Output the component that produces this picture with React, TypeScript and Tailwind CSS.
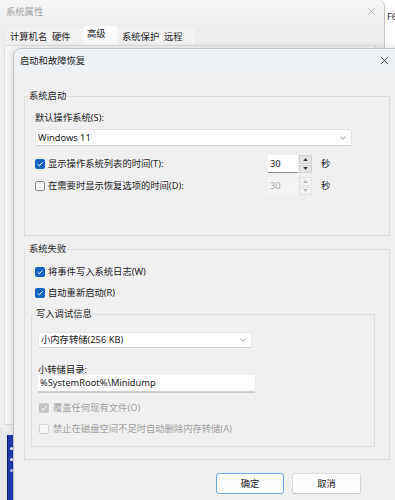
import React from 'react';

function CloseIcon({ className }: { className?: string }) {
  return (
    <svg viewBox="0 0 10 10" className={className} fill="none" stroke="currentColor" strokeWidth="0.9">
      <path d="M1 1 L9 9 M9 1 L1 9" />
    </svg>
  );
}

function Chevron() {
  return (
    <svg viewBox="0 0 6 4" className="h-[4px] w-[6px] text-[#7a7a7a]" fill="none" stroke="currentColor" strokeWidth="0.8">
      <path d="M0.5 0.8 L3 3.2 L5.5 0.8" />
    </svg>
  );
}

function Check({ checked, disabled }: { checked?: boolean; disabled?: boolean }) {
  if (checked) {
    return (
      <span
        className={`flex h-[10px] w-[10px] shrink-0 items-center justify-center rounded-[2px] ${
          disabled ? 'bg-[#c6c6c6]' : 'bg-[#1464bf]'
        }`}
      >
        <svg viewBox="0 0 10 10" className="h-[10px] w-[10px]" fill="none" stroke="white" strokeWidth="1">
          <path d="M2.6 5.2 L4.3 6.8 L7.5 3.4" />
        </svg>
      </span>
    );
  }
  return (
    <span
      className={`h-[10px] w-[10px] shrink-0 rounded-[2px] border ${
        disabled ? 'border-[#d3d3d3] bg-[#f8f8f8]' : 'border-[#8c8c8c] bg-white'
      }`}
    />
  );
}

function Spinner({ disabled }: { disabled?: boolean }) {
  const tri = disabled ? 'text-[#b8b8b8]' : 'text-[#333]';
  return (
    <div className="flex h-[18px] items-stretch">
      <div
        className={`flex w-[30px] items-center pl-[2px] ${
          disabled ? 'bg-[#f4f4f4] text-[#a8a8a8]' : 'border-b border-[#8a8a8a] bg-white'
        }`}
      >
        30
      </div>
      <div className="ml-[1px] flex w-[13px] flex-col gap-[1px]">
        <span
          className={`flex flex-1 items-center justify-center border ${
            disabled ? 'border-[#e2e2e2] bg-[#f3f3f3]' : 'border-[#cfcfcf] bg-[#e6e6e6]'
          } ${tri}`}
        >
          <svg viewBox="0 0 6 4" className="h-[3px] w-[5px]" fill="currentColor">
            <path d="M3 0 L6 4 L0 4 Z" />
          </svg>
        </span>
        <span
          className={`flex flex-1 items-center justify-center border ${
            disabled ? 'border-[#e2e2e2] bg-[#f3f3f3]' : 'border-[#cfcfcf] bg-[#e6e6e6]'
          } ${tri}`}
        >
          <svg viewBox="0 0 6 4" className="h-[3px] w-[5px]" fill="currentColor">
            <path d="M0 0 L6 0 L3 4 Z" />
          </svg>
        </span>
      </div>
      <span className={`ml-[9px] flex items-center ${disabled ? '' : ''}`}>秒</span>
    </div>
  );
}

const tabs = [
  { label: '计算机名', w: 'w-[43px]', pl: 'pl-[4px]' },
  { label: '硬件', w: 'w-[35px]', pl: 'pl-[3px]' },
  { label: '高级', w: 'w-[34px]', pl: 'pl-[3px]', active: true },
  { label: '系统保护', w: 'w-[44px]', pl: 'pl-[4px]' },
  { label: '远程', w: 'w-[32px]', pl: 'pl-[2px]' },
];

export default function App() {
  return (
    <div className="relative h-[500px] w-[395px] overflow-hidden bg-white font-['Noto_Sans','Noto_Sans_CJK_SC',sans-serif] text-[9.3px] text-[#1b1b1b]">
      {/* desktop strip below the parent window */}
      <div className="absolute left-0 top-[420px] h-[80px] w-[14px] bg-[#e4e6ea]" />
      <div className="absolute left-[7px] top-[435px] flex h-[65px] w-[7px] flex-col items-center gap-[8px] border-l border-[#0b1f6e] bg-[#1d3caf] pt-[12px]">
        <span className="h-[3px] w-[3px] rounded-full bg-white" />
        <span className="h-[3px] w-[3px] rounded-full bg-white" />
        <span className="h-[3px] w-[3px] rounded-full bg-[#b8c4ee]" />
      </div>

      {/* parent window: 系统属性 */}
      <div className="absolute left-0 top-[-1px] h-[434px] w-[385px] rounded-bl-[10px] rounded-tr-[8px] border-r border-[#c8c8c8] bg-[#f0f0f0]">
        <div className="flex h-[25px] items-center justify-between rounded-tr-[8px] bg-gradient-to-b from-[#f6f6f6] to-[#efefef] pl-[6px] pr-[8px]">
          <span className="text-[#a3a3a3]">系统属性</span>
          <CloseIcon className="h-[9px] w-[9px] text-[#b0b0b0]" />
        </div>
        <div className="flex h-[21px] items-end bg-[#eeeeee] pl-[6px]">
          {tabs.map((t) => (
            <span
              key={t.label}
              className={`${t.w} ${t.pl} flex items-center ${
                t.active ? 'h-[19px] bg-[#fafafa] pb-[3px]' : 'h-[17px] border-r border-[#f7f7f7] bg-[#f2f2f2]'
              }`}
            >
              {t.label}
            </span>
          ))}
        </div>
        <div className="ml-[4px] mr-[8px] h-[380px] border border-[#dfdfdf] bg-[#f7f7f7]" />
      </div>
      <span className="absolute left-[387px] top-[11px] leading-[12px] text-[#333]">F6A</span>

      {/* child dialog: 启动和故障恢复 */}
      <div className="absolute left-[13px] top-[48px] h-[470px] w-[400px] rounded-tl-[8px] border border-[#bfbfbf] bg-[#f0f0f0] shadow-[0_0_8px_rgba(0,0,0,0.16)]">
        <div className="flex h-[23px] items-center rounded-tl-[8px] bg-[#eef2f6] pl-[6px]">
          <span>启动和故障恢复</span>
          <CloseIcon className="ml-auto mr-[23px] h-[9px] w-[9px] text-[#222]" />
        </div>

        <div className="pl-[10px]">
          {/* 系统启动 */}
          <fieldset className="mt-[18px] w-[366px] border border-[#dcdcdc] p-0">
            <legend className="ml-[3px] px-[1px] leading-[12px]">系统启动</legend>
            <div className="px-[10px] pb-[40px]">
              <div className="mt-[10px] leading-[12px]">默认操作系统(S):</div>
              <div className="mt-[5px] flex h-[17px] w-[317px] items-center justify-between rounded-[2px] border border-[#e4e4e4] border-b-[#d0d0d0] bg-white pl-[2px] pr-[5px]">
                <span>Windows 11</span>
                <Chevron />
              </div>
              <div className="mt-[9px] flex h-[18px] items-center">
                <div className="flex w-[233px] items-center gap-[3px]">
                  <Check checked />
                  <span>显示操作系统列表的时间(T):</span>
                </div>
                <Spinner />
              </div>
              <div className="mt-[4px] flex h-[18px] items-center">
                <div className="flex w-[233px] items-center gap-[3px]">
                  <Check />
                  <span>在需要时显示恢复选项的时间(D):</span>
                </div>
                <Spinner disabled />
              </div>
            </div>
          </fieldset>

          {/* 系统失败 */}
          <fieldset className="mt-[7px] w-[366px] border border-[#dcdcdc] p-0">
            <legend className="ml-[3px] px-[1px] leading-[12px]">系统失败</legend>
            <div className="px-[6px] pb-[12px]">
              <div className="mt-[10px] flex h-[14px] items-center gap-[3px] pl-[4px]">
                <Check checked />
                <span>将事件写入系统日志(W)</span>
              </div>
              <div className="mt-[7px] flex h-[14px] items-center gap-[3px] pl-[4px]">
                <Check checked />
                <span>自动重新启动(R)</span>
              </div>

              <fieldset className="mt-[8px] w-[344px] border border-[#dcdcdc] p-0">
                <legend className="ml-[3px] px-[1px] leading-[12px]">写入调试信息</legend>
                <div className="px-[6px] pb-[10px]">
                  <div className="mt-[12px] flex h-[16px] w-[214px] items-center justify-between rounded-[2px] border border-[#e4e4e4] border-b-[#d0d0d0] bg-white pl-[2px] pr-[5px]">
                    <span>小内存转储(256 KB)</span>
                    <Chevron />
                  </div>
                  <div className="mt-[16px] leading-[12px]">小转储目录:</div>
                  <div className="mt-[-1px] flex h-[18px] w-[217px] items-center border-b-[2px] border-[#cfcfcf] bg-white pl-[2px]">
                    %SystemRoot%\Minidump
                  </div>
                  <div className="mt-[8px] flex h-[14px] items-center gap-[4px] pl-[1px] text-[#a0a0a0]">
                    <Check checked disabled />
                    <span>覆盖任何现有文件(O)</span>
                  </div>
                  <div className="mt-[7px] flex h-[14px] items-center gap-[4px] pl-[1px] text-[#a0a0a0]">
                    <Check disabled />
                    <span>禁止在磁盘空间不足时自动删除内存转储(A)</span>
                  </div>
                </div>
              </fieldset>
            </div>
          </fieldset>

          <div className="ml-[192px] mt-[13px] flex gap-[8px]">
            <button className="flex h-[21px] w-[68px] items-center justify-center rounded-[3px] border border-[#6fa8e6] bg-[#fdfdfd]">
              确定
            </button>
            <button className="flex h-[21px] w-[69px] items-center justify-center rounded-[3px] border border-[#dadada] border-b-[#c4c4c4] bg-[#fdfdfd]">
              取消
            </button>
          </div>
        </div>
      </div>
    </div>
  );
}
